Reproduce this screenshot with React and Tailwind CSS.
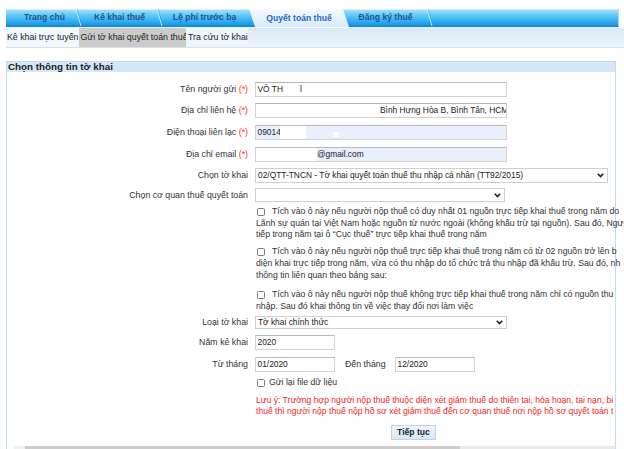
import React from "react";

function Req() {
  return <span className="text-[#ff2d2d]"> (*)</span>;
}

function Chevron() {
  return (
    <svg width="7" height="5" viewBox="0 0 7 5" className="shrink-0">
      <path d="M0.8 0.8L3.5 3.6L6.2 0.8" fill="none" stroke="#1a1a1a" strokeWidth="1.5" />
    </svg>
  );
}

function Box() {
  return <span className="block w-[8px] h-[8px] border border-[#7a7a7a] rounded-[1.5px] bg-white shrink-0" />;
}

// slanted divider between two blue menu tabs
function Sep() {
  return (
    <svg className="absolute right-[-4px] top-0" width="8" height="17" viewBox="0 0 8 17">
      <line x1="1" y1="0" x2="6" y2="17" stroke="#c9f0fd" strokeWidth="1" />
      <line x1="2" y1="0" x2="7" y2="17" stroke="#1c98e4" strokeWidth="0.8" opacity="0.6" />
    </svg>
  );
}

function Row({ label, req, className, children }) {
  return (
    <div className={"flex items-center " + className}>
      <div className="w-[241px] text-right text-[8.8px] text-[#333] whitespace-nowrap leading-none">
        {label}
        {req ? <Req /> : null}
      </div>
      <div className="ml-[7px] flex items-center">{children}</div>
    </div>
  );
}

export default function App() {
  return (
    <div className="w-[624px] h-[449px] overflow-hidden bg-white font-['Liberation_Sans',Arial,sans-serif] text-[#333]">
      {/* main menu */}
      <div className="ml-[6px] mt-[9px] w-[613px] h-[18px] flex border-b border-[#0b82d8] border-r border-r-[#9ddcf8] bg-[linear-gradient(to_bottom,#a9e4fb_0%,#64caf6_35%,#2eabef_75%,#1191e2_100%)] shadow-[inset_0_1px_0_#d4f3fe] text-[8.6px] font-bold text-[#1f538f] whitespace-nowrap">
        <div className="relative w-[73px] flex items-center justify-center pl-[4px]">
          Trang chủ
          <Sep />
        </div>
        <div className="relative w-[81px] flex items-center justify-center">
          Kê khai thuế
          <Sep />
        </div>
        <div className="relative w-[89px] flex items-center justify-center">Lệ phí trước bạ</div>
        <div className="w-[100px] h-[18px] -mb-[1px] flex items-center justify-center text-[#2869c3] bg-[linear-gradient(to_bottom,#f6fbff,#d6eafa)] [clip-path:polygon(0_0,94px_0,100px_100%,6px_100%)]">
          Quyết toán thuế
        </div>
        <div className="relative w-[81px] flex items-center justify-center pr-[8px]">
          Đăng ký thuế
          <Sep />
        </div>
        <div className="flex-1" />
      </div>

      {/* sub menu */}
      <div className="ml-[6px] mt-[1px] w-[618px] h-[20px] flex border-b border-[#d6e3ee] bg-[linear-gradient(to_bottom,#d9e9f8,#edf5fd)] text-[8.8px] text-[#222] whitespace-nowrap">
        <div className="w-[73px] flex items-center pl-[1px] bg-[#f1f8fe]">Kê khai trực tuyến</div>
        <div className="w-[107px] flex items-center pl-[1.5px] bg-[#cbcbcb]">Gửi tờ khai quyết toán thuế</div>
        <div className="w-[62px] flex items-center pl-[2px] bg-[#eef6fd]">Tra cứu tờ khai</div>
      </div>

      {/* form panel */}
      <div className="ml-[6px] mt-[13px] w-[610px] border-x border-[#c2dbf2]">
        <div className="h-[11px] bg-[#d4e7f8] border-t border-[#c2dbf2] flex items-center text-[9.8px] font-bold text-[#222] leading-none pl-[1px]">
          Chọn thông tin tờ khai
        </div>

        <Row label="Tên người gửi" req className="mt-[10px]">
          <div className="w-[252px] h-[15px] flex items-center border border-[#d2d2d2] border-t-[#b8b8b8] bg-white text-[8.4px] text-[#222] pl-[1.5px] whitespace-nowrap">
            <span>VÕ TH</span>
            <span className="ml-[17px]">l</span>
          </div>
        </Row>

        <Row label="Địa chỉ liên hệ" req className="mt-[6px]">
          <div className="w-[252px] h-[15px] flex items-center border border-[#d2d2d2] border-t-[#b8b8b8] bg-white text-[8.4px] text-[#222] overflow-hidden whitespace-nowrap">
            <span className="ml-[124px]">Bình Hưng Hòa B, Bình Tân, HCM</span>
          </div>
        </Row>

        <Row label="Điện thoại liên lạc" req className="mt-[7px]">
          <div className="w-[252px] h-[15px] flex items-stretch border border-[#d2d2d2] border-t-[#b8b8b8] bg-[#e8f0fe] text-[8.4px] text-[#222] whitespace-nowrap">
            <div className="w-[24px] overflow-hidden flex items-center pl-[1.5px]">09014</div>
            <div className="w-[26px] bg-white" />
            <div className="ml-[27px] mt-[6px] w-[6px] h-[5px] bg-white" />
          </div>
        </Row>

        <Row label="Địa chỉ email" req className="mt-[7px]">
          <div className="w-[252px] h-[15px] flex items-stretch border border-[#d2d2d2] border-t-[#b8b8b8] bg-[#e8f0fe] text-[8.4px] text-[#222] whitespace-nowrap">
            <div className="w-[61px] bg-white" />
            <div className="flex items-center">@gmail.com</div>
          </div>
        </Row>

        <Row label="Chọn tờ khai" className="mt-[6px]">
          <div className="w-[353px] h-[15px] flex items-center justify-between border border-[#cfcfcf] bg-white text-[8.4px] text-[#222] pl-[2px] pr-[3px] whitespace-nowrap">
            <span>02/QTT-TNCN - Tờ khai quyết toán thuế thu nhập cá nhân (TT92/2015)</span>
            <Chevron />
          </div>
        </Row>

        <Row label="Chọn cơ quan thuế quyết toán" className="mt-[5px]">
          <div className="w-[250px] h-[14px] flex items-center justify-end border border-[#cfcfcf] bg-white pr-[3px]">
            <Chevron />
          </div>
        </Row>

        {/* option paragraphs */}
        <div className="ml-[249px] mt-[4px] text-[8.7px] leading-[11.7px] text-[#333] whitespace-nowrap">
          <div className="flex items-center">
            <span className="ml-[1px]"><Box /></span>
            <span className="ml-[7px]">Tích vào ô này nếu người nộp thuế có duy nhất 01 nguồn trực tiếp khai thuế trong năm do</span>
          </div>
          <div>Lãnh sự quán tại Việt Nam hoặc nguồn từ nước ngoài (không khấu trừ tại nguồn). Sau đó, Người</div>
          <div>tiếp trong năm tại ô “Cục thuế” trực tiếp khai thuế trong năm</div>
        </div>

        <div className="ml-[249px] mt-[5px] text-[8.7px] leading-[11.7px] text-[#333] whitespace-nowrap">
          <div className="flex items-center">
            <span className="ml-[1px]"><Box /></span>
            <span className="ml-[7px]">Tích vào ô này nếu người nộp thuế trực tiếp khai thuế trong năm có từ 02 nguồn trở lên b</span>
          </div>
          <div>diện khai trực tiếp trong năm, vừa có thu nhập do tổ chức trả thu nhập đã khấu trừ. Sau đó, nh</div>
          <div>thông tin liên quan theo bảng sau:</div>
        </div>

        <div className="ml-[249px] mt-[8px] text-[8.7px] leading-[11.7px] text-[#333] whitespace-nowrap">
          <div className="flex items-center">
            <span className="ml-[1px]"><Box /></span>
            <span className="ml-[7px]">Tích vào ô này nếu người nộp thuế không trực tiếp khai thuế trong năm chỉ có nguồn thu</span>
          </div>
          <div>nhập. Sau đó khai thông tin về việc thay đổi nơi làm việc</div>
        </div>

        <Row label="Loại tờ khai" className="mt-[3px]">
          <div className="w-[252px] h-[13px] flex items-center justify-between border border-[#cfcfcf] bg-white text-[8.4px] text-[#222] pl-[2px] pr-[3px] whitespace-nowrap">
            <span>Tờ khai chính thức</span>
            <Chevron />
          </div>
        </Row>

        <Row label="Năm kê khai" className="mt-[6px]">
          <div className="w-[80px] h-[15px] flex items-center border border-[#d2d2d2] border-t-[#b8b8b8] bg-white text-[8.4px] text-[#222] pl-[1.5px]">
            2020
          </div>
        </Row>

        <Row label="Từ tháng" className="mt-[7px]">
          <div className="w-[80px] h-[15px] flex items-center border border-[#d2d2d2] border-t-[#b8b8b8] bg-white text-[8.4px] text-[#222] pl-[1.5px]">
            01/2020
          </div>
          <span className="ml-[10px] w-[50px] text-[8.8px] text-[#333] whitespace-nowrap">Đến tháng</span>
          <div className="w-[80px] h-[15px] flex items-center border border-[#d2d2d2] border-t-[#b8b8b8] bg-white text-[8.4px] text-[#222] pl-[1.5px]">
            12/2020
          </div>
        </Row>

        <div className="ml-[250px] mt-[5px] h-[12px] flex items-center text-[8.7px] text-[#333] whitespace-nowrap">
          <Box />
          <span className="ml-[4px]">Gửi lại file dữ liệu</span>
        </div>

        {/* note cell clips its own overflow */}
        <div className="ml-[249px] mt-[6px] w-[357px] overflow-hidden text-[8.6px] leading-[11.5px] text-[#f21c1c] whitespace-nowrap">
          <div>Lưu ý: Trường hợp người nộp thuế thuộc diện xét giảm thuế do thiên tai, hỏa hoạn, tai nạn, bệnh</div>
          <div>thuế thì người nộp thuế nộp hồ sơ xét giảm thuế đến cơ quan thuế nơi nộp hồ sơ quyết toán thuế</div>
        </div>

        <div className="ml-[384px] mt-[7.5px] flex">
          <button className="w-[45px] h-[15px] flex items-center justify-center border border-[#bcd5ec] bg-[linear-gradient(to_bottom,#eef6fd,#d6e8f8)] text-[8.6px] font-bold text-[#222] leading-none">
            Tiếp tục
          </button>
        </div>

        {/* horizontal scroll track */}
        <div className="ml-[7px] mt-[6px] h-[3px] flex">
          <div className="w-[11px] bg-[#f0f0f0]" />
          <div className="w-[435px] bg-[#cdcdcd]" />
          <div className="flex-1 bg-[#e9e9e9]" />
        </div>
      </div>
    </div>
  );
}
